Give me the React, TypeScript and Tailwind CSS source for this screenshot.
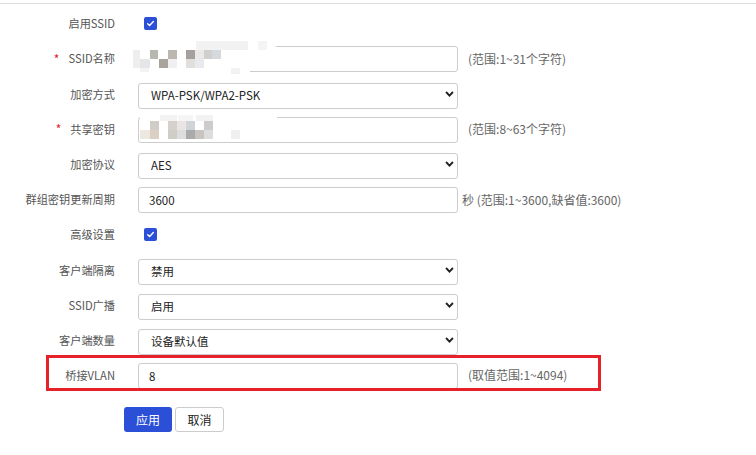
import React from "react"

const font = { fontFamily: '"Noto Sans CJK SC", "Noto Sans", sans-serif' }

type Block = [number, number, number, number, string]

// mosaic blocks over the blurred fields: x, y, w, h, colour
const ssidBlocks: Block[] = [
  [-5, -4, 143, 6, "#ffffff"],
  [-5, -4, 40, 36, "#ffffff"],
  [-5, 23, 117, 6, "#ffffff"],
  [58, -4, 35, 9, "#f2f2f2"],
  [93, -4, 17, 9, "#f2f2f2"],
  [120, -4, 9, 9, "#f4f4f4"],
  [-5, 5, 7, 9, "#eeeeee"],
  [12, 5, 8, 9, "#b8b8b1"],
  [30, 5, 9, 9, "#bcb8b1"],
  [48, 5, 9, 9, "#a5a09d"],
  [57, 5, 9, 9, "#ebe9e7"],
  [66, 5, 8, 9, "#cfcfcf"],
  [74, 5, 9, 9, "#d6d9dc"],
  [-5, 14, 7, 9, "#eeeeee"],
  [2, 14, 10, 9, "#e4e6ea"],
  [21, 14, 9, 9, "#a8a49d"],
  [30, 14, 9, 9, "#f0f0f0"],
  [48, 14, 9, 9, "#e1dfdb"],
  [57, 14, 9, 9, "#e8eaee"],
  [93, 23, 9, 6, "#f2f2f2"],
  [2, 23, 9, 4, "#f3f3f3"],
]

const keyBlocks: Block[] = [
  [2, -2, 137, 4, "#ffffff"],
  [22, -1, 17, 6, "#f3f3f3"],
  [40, -1, 15, 6, "#f5f5f5"],
  [58, -1, 17, 6, "#f2f2f2"],
  [12, 5, 9, 9, "#d0cdc8"],
  [30, 5, 9, 9, "#d5d0cc"],
  [39, 5, 9, 9, "#eae5e2"],
  [48, 5, 9, 9, "#d0d4d8"],
  [66, 5, 9, 9, "#cccccc"],
  [2, 14, 10, 9, "#ede8e2"],
  [12, 14, 9, 9, "#dcd0c4"],
  [30, 14, 9, 9, "#d0ccc8"],
  [39, 14, 9, 9, "#dddddd"],
  [48, 14, 9, 9, "#aaaaaa"],
  [57, 14, 9, 9, "#c8c4c0"],
  [66, 14, 9, 9, "#dddddd"],
  [93, 14, 9, 9, "#f0f0f0"],
]

function Mosaic({ blocks }: { blocks: Block[] }) {
  return (
    <div className="pointer-events-none absolute left-0 top-0">
      {blocks.map(([x, y, w, h, c], i) => (
        <div
          key={i}
          className="absolute"
          style={{ left: x, top: y, width: w, height: h, background: c }}
        />
      ))}
    </div>
  )
}

function Check() {
  return (
    <div className="ml-[6px] flex h-[13px] w-[13px] items-center justify-center rounded-[2px] bg-[#2c4fd8]">
      <svg viewBox="0 0 12 12" className="h-[9px] w-[9px]">
        <polyline points="2.2,6.2 4.8,8.6 9.8,3.4" fill="none" stroke="white" strokeWidth="1.8" strokeLinecap="round" strokeLinejoin="round" />
      </svg>
    </div>
  )
}

function TextBox({ value = "", mosaic }: { value?: string; mosaic?: Block[] }) {
  return (
    <div className="relative">
      <input
        readOnly
        value={value}
        className="h-[26px] w-[320px] rounded-[3px] border border-[#cccccc] bg-white pl-[10px] text-[11.5px] text-[#222] outline-none"
        style={font}
      />
      {mosaic && <Mosaic blocks={mosaic} />}
    </div>
  )
}

function Select({ value }: { value: string }) {
  return (
    <div className="relative h-[26px] w-[320px]">
      <select
        value={value}
        onChange={() => {}}
        className="h-full w-full appearance-none rounded-[3px] border border-[#cccccc] bg-white pl-[12px] text-[11.5px] text-[#222] outline-none"
        style={font}
      >
        <option>{value}</option>
      </select>
      <svg viewBox="0 0 10 7" className="pointer-events-none absolute right-[4px] top-[10px] h-[6px] w-[9px]">
        <polyline points="1,1.2 5,5.3 9,1.2" fill="none" stroke="#222" strokeWidth="2.2" />
      </svg>
    </div>
  )
}

function Row({ label, req, children, hint }: { label: string; req?: boolean; children: React.ReactNode; hint?: React.ReactNode }) {
  return (
    <div className="flex h-[35.2px] items-center">
      <div className="flex w-[115px] shrink-0 items-center justify-end text-[11.2px] text-[#555]">
        {req && <span className="mr-[9px] text-[12px] text-[#e8202a]">*</span>}
        <span>{label}</span>
      </div>
      <div className="ml-[23px] flex items-center">
        {children}
        {hint && <span className="ml-[10px] text-[12px] text-[#666]">{hint}</span>}
      </div>
    </div>
  )
}

export default function App() {
  return (
    <div className="relative h-[455px] w-[756px] bg-white" style={font}>
      <div className="h-[3px]" />
      <div className="border-t border-[#dddddd] pt-[2px]">
        <Row label="启用SSID">
          <Check />
        </Row>
        <Row label="SSID名称" req hint="(范围:1~31个字符)">
          <TextBox mosaic={ssidBlocks} />
        </Row>
        <Row label="加密方式">
          <Select value="WPA-PSK/WPA2-PSK" />
        </Row>
        <Row label="共享密钥" req hint="(范围:8~63个字符)">
          <TextBox mosaic={keyBlocks} />
        </Row>
        <Row label="加密协议">
          <Select value="AES" />
        </Row>
        <Row label="群组密钥更新周期" hint={<span className="-ml-[6px]">秒&nbsp;(范围:1~3600,缺省值:3600)</span>}>
          <TextBox value="3600" />
        </Row>
        <Row label="高级设置">
          <Check />
        </Row>
        <Row label="客户端隔离">
          <Select value="禁用" />
        </Row>
        <Row label="SSID广播">
          <Select value="启用" />
        </Row>
        <Row label="客户端数量">
          <Select value="设备默认值" />
        </Row>
        <Row label="桥接VLAN" hint="(取值范围:1~4094)">
          <TextBox value="8" />
        </Row>
        <div className="ml-[124px] mt-[14px] flex gap-[3px]">
          <button className="h-[25px] w-[48px] rounded-[3px] bg-[#2c4fd8] text-[12px] text-white">应用</button>
          <button className="h-[25px] w-[49px] rounded-[3px] border border-[#cccccc] bg-white text-[12px] text-[#222]">取消</button>
        </div>
      </div>
      <div className="pointer-events-none absolute left-[46px] top-[355px] h-[36px] w-[555px] border-[3px] border-[#e8202a]" />
    </div>
  )
}
